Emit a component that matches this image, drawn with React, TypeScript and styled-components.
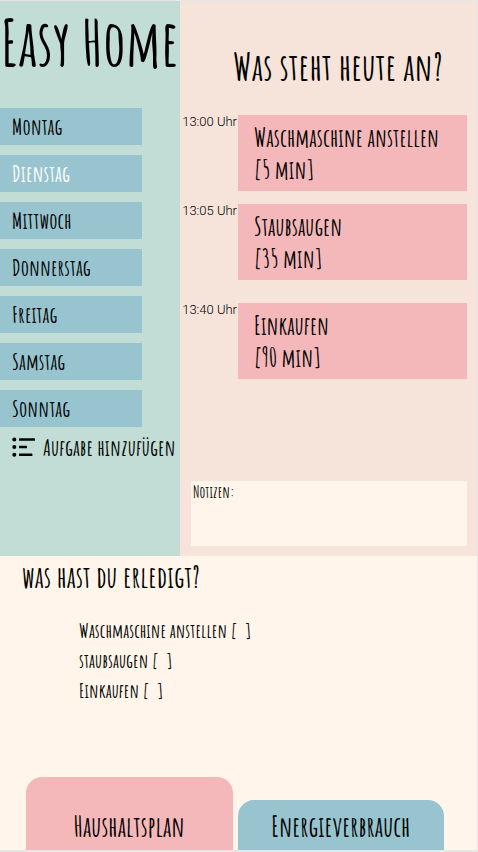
import React from 'react';
import styled, { createGlobalStyle } from 'styled-components';

const display = `'Amatic SC', 'Liberation Sans Narrow', 'Roboto', sans-serif`;

const GlobalStyle = createGlobalStyle`
  * { box-sizing: border-box; }
  body { margin: 0; background: #e6e6e6; color: #000; font-family: ${display}; font-weight: 700; }
  h1, h2, p, ul, ol { margin: 0; padding: 0; font-weight: 700; }
  li { list-style: none; }
  button, textarea, input { font: inherit; color: inherit; margin: 0; border: 0; }
  button { cursor: pointer; }
`;

const Page = styled.div`
  min-height: 100vh;
  display: flex;
  flex-direction: column;
  border: solid #e6e6e6;
  border-width: 1px 1px 2px 0;
  background: #fff5ea;
`;

const Planner = styled.div`
  display: grid;
  grid-template-columns: 180px minmax(0, 1fr);
`;

const Sidebar = styled.aside`
  background: #c2ddd5;
`;

const Brand = styled.h1`
  height: 107px;
  padding-left: 1px;
  font-size: 63px;
  line-height: 82px;
  white-space: nowrap;
`;

const DayList = styled.ul`
  display: flex;
  flex-direction: column;
  gap: 10px;
  width: 142px;
`;

const DayButton = styled.button<{ $active?: boolean }>`
  display: block;
  width: 100%;
  height: 37px;
  padding: 0 12px;
  background: #98c4cf;
  color: ${(p) => (p.$active ? '#fff' : '#000')};
  font-size: 23px;
  line-height: 37px;
  text-align: left;
`;

const AddButton = styled.button`
  display: flex;
  align-items: center;
  gap: 8px;
  width: 100%;
  height: 40px;
  padding: 0 0 0 12px;
  background: transparent;
  font-size: 23px;
  white-space: nowrap;
  svg { flex: none; }
`;

const Today = styled.main`
  display: flex;
  flex-direction: column;
  padding: 0 10px 10px 0;
  background: #f6e4da;
`;

const TodayTitle = styled.h2`
  height: 114px;
  padding-left: 53px;
  font-size: 38px;
  line-height: 130px;
  white-space: nowrap;
`;

const TaskList = styled.ol`
  display: flex;
  flex-direction: column;
`;

const Task = styled.li<{ $gap: number }>`
  display: grid;
  grid-template-columns: 58px minmax(0, 1fr);
  margin-top: ${(p) => p.$gap}px;
`;

const Time = styled.time`
  padding-right: 1px;
  font: 300 13px/14px 'Roboto', sans-serif;
  text-align: right;
  white-space: nowrap;
`;

const TaskCard = styled.div`
  padding: 7px 0 5px 16px;
  background: #f4b8ba;
  font-size: 25px;
  line-height: 32px;
  white-space: nowrap;
`;

const Notes = styled.label`
  display: flex;
  flex-direction: column;
  height: 65px;
  margin: 102px 0 0 11px;
  padding: 0 2px;
  background: #fff5ea;
  font-size: 16px;
  line-height: 22px;
`;

const NotesInput = styled.textarea`
  flex: 1;
  min-height: 0;
  padding: 0;
  background: transparent;
  resize: none;
  outline: none;
`;

const Done = styled.section`
  flex: 1;
`;

const DoneTitle = styled.h2`
  padding-left: 22px;
  font-size: 30px;
  line-height: 42px;
`;

const DoneList = styled.ul`
  padding: 18px 0 0 79px;
`;

const DoneItem = styled.label`
  display: flex;
  width: fit-content;
  font-size: 20px;
  line-height: 30px;
  white-space: pre;
`;

const Check = styled.input`
  appearance: none;
  width: 8px;
  height: 30px;
  background: transparent;
  &:checked::before { content: '×'; }
`;

const Tabs = styled.nav`
  display: flex;
  align-items: flex-end;
  gap: 5px;
  padding: 0 33px 0 26px;
`;

const Tab = styled.button<{ $active?: boolean }>`
  flex: 1;
  height: ${(p) => (p.$active ? 73 : 50)}px;
  padding: 0 0 7px;
  display: flex;
  align-items: flex-end;
  justify-content: center;
  border-radius: 16px 16px 0 0;
  background: ${(p) => (p.$active ? '#f4b8ba' : '#98c4cf')};
  font-size: 28px;
  line-height: 32px;
`;

const days = ['Montag', 'Dienstag', 'Mittwoch', 'Donnerstag', 'Freitag', 'Samstag', 'Sonntag'];

const tasks = [
  { time: '13:00', name: 'Waschmaschine anstellen', minutes: 5, gap: 0 },
  { time: '13:05', name: 'Staubsaugen', minutes: 35, gap: 13 },
  { time: '13:40', name: 'Einkaufen', minutes: 90, gap: 23 },
];

const doneItems = ['Waschmaschine anstellen', 'staubsaugen', 'Einkaufen'];

const ListIcon = () => (
  <svg width="23" height="20" viewBox="0 0 23 20" aria-hidden="true">
    <g fill="#000">
      <circle cx="2.3" cy="2.5" r="2" />
      <circle cx="2.3" cy="10" r="2" />
      <circle cx="2.3" cy="17.7" r="2" />
      <rect x="7" y="1.2" width="16" height="2.6" rx="0.5" />
      <rect x="7" y="8.8" width="8" height="2.5" rx="0.5" />
      <rect x="7" y="16.4" width="13.4" height="2.6" rx="0.5" />
    </g>
  </svg>
);

export default function App() {
  return (
    <>
      <GlobalStyle />
      <Page>
        <Planner>
          <Sidebar>
            <Brand>Easy Home</Brand>
            <DayList>
              {days.map((day) => (
                <li key={day}>
                  <DayButton $active={day === 'Dienstag'}>{day}</DayButton>
                </li>
              ))}
            </DayList>
            <AddButton>
              <ListIcon />
              Aufgabe hinzufügen
            </AddButton>
          </Sidebar>
          <Today>
            <TodayTitle>Was steht heute an?</TodayTitle>
            <TaskList>
              {tasks.map((task) => (
                <Task key={task.time} $gap={task.gap}>
                  <Time>{task.time} Uhr</Time>
                  <TaskCard>
                    <p>{task.name}</p>
                    <p>[{task.minutes} min]</p>
                  </TaskCard>
                </Task>
              ))}
            </TaskList>
            <Notes>
              Notizen:
              <NotesInput />
            </Notes>
          </Today>
        </Planner>
        <Done>
          <DoneTitle>was hast du erledigt?</DoneTitle>
          <DoneList>
            {doneItems.map((item) => (
              <li key={item}>
                <DoneItem>
                  {item} [<Check type="checkbox" />]
                </DoneItem>
              </li>
            ))}
          </DoneList>
        </Done>
        <Tabs>
          <Tab $active>Haushaltsplan</Tab>
          <Tab>Energieverbrauch</Tab>
        </Tabs>
      </Page>
    </>
  );
}
